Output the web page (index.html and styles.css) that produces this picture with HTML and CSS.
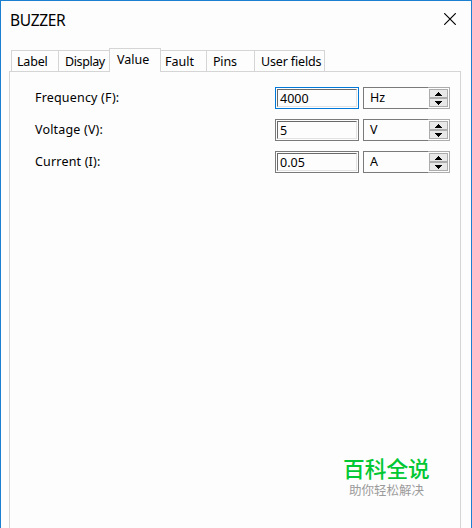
FILE: index.html
```html
<!DOCTYPE html>
<html lang="en">
<head>
<meta charset="utf-8">
<title>BUZZER</title>
<link rel="stylesheet" href="styles.css">
</head>
<body>
<div class="window">
  <header class="titlebar">
    <h1 class="title">BUZZER</h1>
    <svg class="close" width="12" height="12" viewBox="0 0 12 12"><path d="M.2 .2 11.8 11.8M11.8 .2 .2 11.8" fill="none" stroke="#000" stroke-width="1.15"/></svg>
  </header>
  <nav class="tabs">
    <span class="tab label">Label</span>
    <span class="tab display">Display</span>
    <span class="tab value">Value</span>
    <span class="tab fault">Fault</span>
    <span class="tab pins">Pins</span>
    <span class="tab user">User fields</span>
  </nav>
  <main class="panel">
    <div class="row">
      <span class="name">Frequency (F):</span>
      <div class="field focused"><div class="well">4000</div></div>
      <div class="unit"><span class="unit-text">Hz</span>
        <div class="spinner">
          <div class="step"><svg width="7" height="4" viewBox="0 0 7 4"><path d="M3 0h1v1h1v1h1v1h1v1H0V3h1V2h1V1h1z"/></svg></div>
          <div class="step"><svg width="7" height="4" viewBox="0 0 7 4"><path d="M0 0h7v1H6v1H5v1H4v1H3V3H2V2H1V1H0z"/></svg></div>
        </div>
      </div>
    </div>
    <div class="row">
      <span class="name">Voltage (V):</span>
      <div class="field"><div class="well">5</div></div>
      <div class="unit"><span class="unit-text">V</span>
        <div class="spinner">
          <div class="step"><svg width="7" height="4" viewBox="0 0 7 4"><path d="M3 0h1v1h1v1h1v1h1v1H0V3h1V2h1V1h1z"/></svg></div>
          <div class="step"><svg width="7" height="4" viewBox="0 0 7 4"><path d="M0 0h7v1H6v1H5v1H4v1H3V3H2V2H1V1H0z"/></svg></div>
        </div>
      </div>
    </div>
    <div class="row">
      <span class="name">Current (I):</span>
      <div class="field"><div class="well">0.05</div></div>
      <div class="unit"><span class="unit-text">A</span>
        <div class="spinner">
          <div class="step"><svg width="7" height="4" viewBox="0 0 7 4"><path d="M3 0h1v1h1v1h1v1h1v1H0V3h1V2h1V1h1z"/></svg></div>
          <div class="step"><svg width="7" height="4" viewBox="0 0 7 4"><path d="M0 0h7v1H6v1H5v1H4v1H3V3H2V2H1V1H0z"/></svg></div>
        </div>
      </div>
    </div>
  </main>
  <aside class="watermark" lang="zh-CN">
    <div class="brand">百科全说</div>
    <div class="slogan">助你轻松解决</div>
  </aside>
</div>
</body>
</html>
```
FILE: styles.css
```css
* { box-sizing: border-box; }
body {
  margin: 0;
  overflow: hidden;
  font-family: "Noto Sans", "DejaVu Sans", sans-serif;
  font-size: 12.5px;
  line-height: 16px;
  color: #000;
}
.window {
  position: relative;
  display: flex;
  flex-direction: column;
  width: 472px;
  height: 528px;
  background: #fdfdfd;
  border: 1px solid #1c7fd2;
  border-bottom: 0;
}
.titlebar {
  display: flex;
  justify-content: space-between;
  height: 47px;
  padding: 8px 15px 0 9px;
}
.title {
  margin: 0;
  font-size: 15.5px;
  font-weight: 400;
  line-height: 22px;
  letter-spacing: -0.35px;
}
.close { margin-top: 4px; }
.tabs {
  display: flex;
  align-items: flex-end;
  height: 23px;
  padding-left: 10px;
}
.tab {
  height: 21px;
  padding: 3px 0 0 6px;
  border: 1px solid #d5d5d5;
  border-width: 1px 0 0 1px;
  white-space: nowrap;
}
.label { width: 47px; padding-left: 5px; letter-spacing: -0.2px; }
.display { width: 51px; letter-spacing: -0.4px; }
.value {
  position: relative;
  width: 52px;
  height: 24px;
  margin-bottom: -1px;
  padding: 3px 0 0 7px;
  border-right-width: 1px;
  background: #fdfdfd;
}
.fault { width: 45px; padding-left: 4px; border-left: 0; }
.pins { width: 48px; letter-spacing: -0.2px; }
.user { width: 71px; border-right-width: 1px; letter-spacing: -0.15px; }
.panel {
  flex: 1;
  display: flex;
  flex-direction: column;
  gap: 10px;
  margin: 0 10px 0 8px;
  padding: 15px 10px 0 25px;
  border: 1px solid #d5d5d5;
  border-bottom: 0;
}
.row {
  display: flex;
  height: 22px;
}
.name {
  width: 240px;
  padding-top: 3px;
  letter-spacing: 0.18px;
}
.field {
  width: 84px;
  margin-right: 4px;
  padding: 1px;
  border: 1px solid #7a7a7a;
}
.focused { border-color: #0078d7; }
.well {
  height: 18px;
  padding: 1px 0 0 2px;
  border: 1px solid #696969;
  border-right-color: #e3e3e3;
  border-bottom-color: #e3e3e3;
}
.unit {
  display: flex;
  justify-content: space-between;
  width: 87px;
  border: 1px solid #7a7a7a;
  border-right: 0;
}
.unit-text { padding: 2px 0 0 6px; }
.spinner {
  display: flex;
  flex-direction: column;
  width: 22px;
  margin: -1px 0;
  padding: 1px;
  border: 1px solid #acacac;
  border-left: 0;
}
.step {
  display: flex;
  align-items: center;
  justify-content: center;
  height: 9px;
  background: #e8e8e8;
  border: 1px solid #acacac;
}
.watermark {
  position: absolute;
  left: 342px;
  top: 453px;
  font-family: "Noto Sans CJK SC", sans-serif;
  white-space: nowrap;
}
.brand {
  font-size: 21.7px;
  font-weight: 500;
  line-height: 28px;
  color: #00c832;
}
.slogan {
  padding-left: 6px;
  font-size: 12.5px;
  line-height: 15px;
  color: #9b9b9b;
}
```
